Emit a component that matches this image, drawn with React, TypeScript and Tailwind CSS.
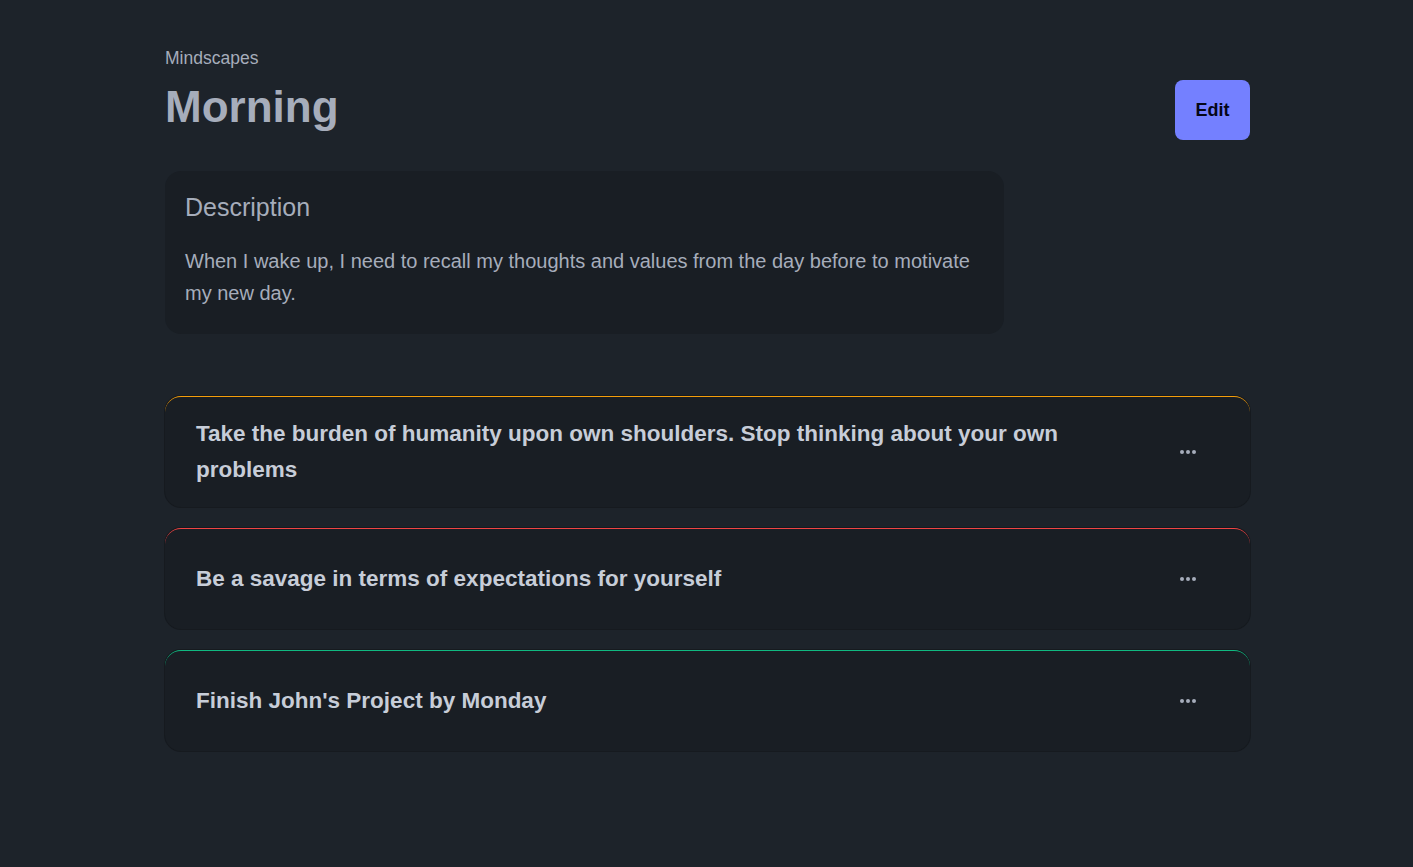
import React from 'react';

const items = [
  { text: "Take the burden of humanity upon own shoulders. Stop thinking about your own problems", color: "border-t-[#f59e0b]" },
  { text: "Be a savage in terms of expectations for yourself", color: "border-t-[#ef4444]" },
  { text: "Finish John's Project by Monday", color: "border-t-[#10b981]" },
];

export default function App() {
  return (
    <div className="min-h-screen w-full bg-[#1d232a] text-[#a6adbb] font-['Liberation_Sans',Arial,sans-serif]">
      <div className="ml-[165px] w-[1085px] pt-[44px] pb-10">
        {/* header */}
        <div className="flex justify-between items-start">
          <div>
            <div className="text-[17.5px] leading-7 text-[#a6adbb]">Mindscapes</div>
            <h1 className="mt-[11px] text-[44px] leading-[48px] font-bold text-[#a6adbb]">Morning</h1>
          </div>
          <button className="mt-[36px] w-[75px] h-[60px] rounded-lg bg-[#7480ff] text-[#050617] text-[18px] font-bold">
            Edit
          </button>
        </div>

        {/* description */}
        <div className="mt-[31px] w-[839px] rounded-2xl bg-[#191e24] px-5 pt-5 pb-[25px]">
          <h2 className="text-[25px] leading-8 text-[#a6adbb]">Description</h2>
          <p className="mt-[22px] text-[20px] leading-8 text-[#a6adbb]">
            When I wake up, I need to recall my thoughts and values from the day before to motivate my new day.
          </p>
        </div>

        {/* list */}
        <div className="mt-[62px] flex flex-col gap-[21px]">
          {items.map((item) => (
            <div
              key={item.text}
              className={`min-h-[101px] flex items-center rounded-2xl bg-[#191e24] border-t border-solid ${item.color} shadow-[0_0_0_1px_#161a1f] pl-[31px] pr-[40px] py-[19px]`}
            >
              <div className="flex-1 pr-[60px] text-[22.5px] leading-9 font-bold text-[#c7cdd8]">{item.text}</div>
              <button className="w-11 h-9 flex items-center justify-center gap-[2px]">
                <span className="w-1 h-1 rounded-full bg-[#a6adbb]"></span>
                <span className="w-1 h-1 rounded-full bg-[#a6adbb]"></span>
                <span className="w-1 h-1 rounded-full bg-[#a6adbb]"></span>
              </button>
            </div>
          ))}
        </div>
      </div>
    </div>
  );
}
